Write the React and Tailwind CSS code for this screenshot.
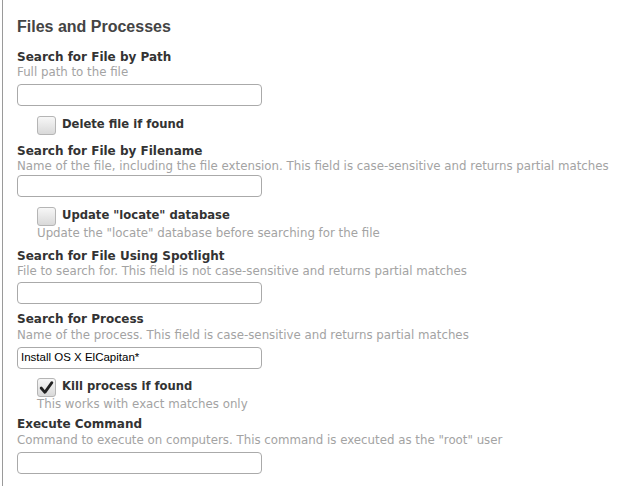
import React from "react";

const font = { fontFamily: '"DejaVu Sans", Verdana, sans-serif' };

function Label({ children, className = "" }) {
  return (
    <div className={"h-[15px] text-[12px] font-bold leading-[15px] text-[#333] " + className}>
      {children}
    </div>
  );
}

function Desc({ children, className = "" }) {
  return (
    <div className={"h-[15px] whitespace-nowrap text-[11.8px] leading-[15px] text-[#a3a3a3] " + className}>
      {children}
    </div>
  );
}

function Input({ value = "", className = "" }) {
  return (
    <div
      className={
        "flex h-[22px] w-[245px] items-center rounded-[4px] border border-[#aaa] bg-white px-[3px] text-[11.5px] text-black " +
        className
      }
      style={{ fontFamily: '"Liberation Sans", Arial, sans-serif' }}
    >
      {value}
    </div>
  );
}

function Check({ checked, label, className = "" }) {
  return (
    <div className={"flex h-[20px] items-center gap-[6px] pl-[20px] " + className}>
      <div className="flex h-[19px] w-[19px] items-center justify-center rounded-[3px] border border-[#b5b5b5] bg-gradient-to-b from-[#f7f7f7] to-[#d9d9d9]">
        {checked && (
          <svg width="15" height="15" viewBox="0 0 14 14">
            <path d="M2 7.5 L5.5 11.5 L12 2.5" fill="none" stroke="#222" strokeWidth="2.6" strokeLinecap="round" strokeLinejoin="round" />
          </svg>
        )}
      </div>
      <div className="text-[11.6px] font-bold text-[#333]">{label}</div>
    </div>
  );
}

export default function App() {
  return (
    <div className="h-[486px] w-[621px] overflow-hidden bg-white" style={font}>
      <div className="ml-[2px] h-full border-l border-[#9a9a9a] pl-[14px] pt-[16px]">
        <div
          className="h-[22px] text-[16px] font-bold leading-[22px] text-[#444]"
          style={{ fontFamily: '"Liberation Sans", Arial, sans-serif' }}
        >
          Files and Processes
        </div>

        <Label className="mt-[12px]">Search for File by Path</Label>
        <Desc>Full path to the file</Desc>
        <Input className="mt-[4px]" />
        <Check className="mt-[9px]" label="Delete file if found" />

        <Label className="mt-[9px]">Search for File by Filename</Label>
        <Desc>Name of the file, including the file extension. This field is case-sensitive and returns partial matches</Desc>
        <Input className="mt-[1px]" />
        <Check className="mt-[9px]" label={'Update "locate" database'} />
        <Desc className="pl-[20px]">Update the "locate" database before searching for the file</Desc>

        <Label className="mt-[8px]">Search for File Using Spotlight</Label>
        <Desc>File to search for. This field is not case-sensitive and returns partial matches</Desc>
        <Input className="mt-[3px]" />

        <Label className="mt-[8px]">Search for Process</Label>
        <Desc className="mt-[1px]">Name of the process. This field is case-sensitive and returns partial matches</Desc>
        <Input className="mt-[4px]" value="Install OS X ElCapitan*" />
        <Check className="mt-[8px]" checked label="Kill process if found" />
        <Desc className="pl-[20px]">This works with exact matches only</Desc>

        <Label className="mt-[5px]">Execute Command</Label>
        <Desc className="mt-[1px]">Command to execute on computers. This command is executed as the "root" user</Desc>
        <Input className="mt-[4px]" />
      </div>
    </div>
  );
}
